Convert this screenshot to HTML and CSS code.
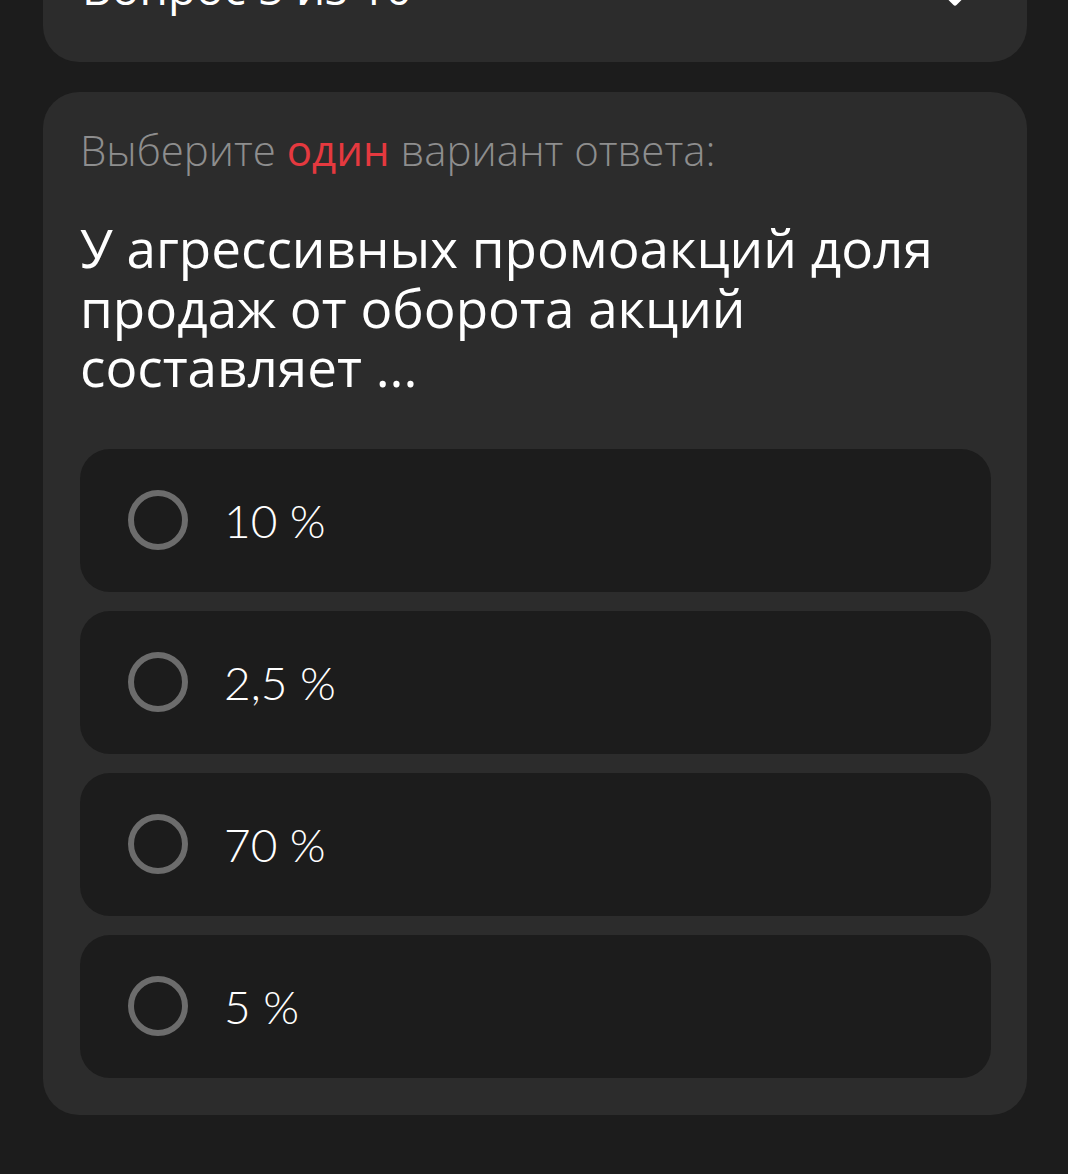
FILE: index.html
```html
<!DOCTYPE html>
<html lang="ru">
<head>
  <meta charset="UTF-8" />
  <meta name="viewport" content="width=device-width, initial-scale=1.0" />
  <title>Вопрос 5 из 10</title>
  <link rel="stylesheet" href="styles.css">
</head>
<body>
  <main class="page">
    <section class="card card-head">
      <div class="head-title">Вопрос 5 из 10</div>
      <svg class="chevron" width="28" height="18" viewBox="0 0 28 18">
        <path d="M3 3 L14 14 L25 3" fill="none" stroke="#fff" stroke-width="5" stroke-linecap="round" stroke-linejoin="round"/>
      </svg>
    </section>

    <section class="card card-question">
      <p class="hint">Выберите <span class="accent">один</span> вариант ответа:</p>
      <h2 class="question">У агрессивных промоакций доля продаж от оборота акций составляет ...</h2>
      <ul class="options">
        <li class="option"><span class="radio"></span><span class="option-text">10 %</span></li>
        <li class="option"><span class="radio"></span><span class="option-text">2,5 %</span></li>
        <li class="option"><span class="radio"></span><span class="option-text">70 %</span></li>
        <li class="option"><span class="radio"></span><span class="option-text">5 %</span></li>
      </ul>
    </section>
  </main>
</body>
</html>
```

FILE: styles.css
```css
body, html {
  margin: 0;
  padding: 0;
  background: #1c1c1c;
  font-family: 'Open Sans', 'Noto Sans', sans-serif;
  color: #fff;
  overflow: hidden;
}
.page {
  display: flex;
  flex-direction: column;
  gap: 30px;
  padding: 0 41px 0 43px;
  margin-top: -60px;
}
.card {
  background: #2c2c2c;
  border-radius: 36px;
}
.card-head {
  height: 122px;
  box-sizing: border-box;
  padding: 19px 58px 0 39px;
  display: flex;
  align-items: flex-start;
  justify-content: space-between;
}
.head-title {
  font-size: 46px;
  line-height: 56px;
  font-weight: 500;
}
.chevron {
  margin-top: 30px;
}
.card-question {
  padding: 33px 36px 37px 37px;
}
.hint {
  margin: 0;
  font-size: 42px;
  line-height: 50px;
  font-weight: 300;
  color: #8e8e8e;
}
.accent {
  color: #e5393f;
  font-weight: 400;
}
.question {
  margin: 43px 0 0;
  font-size: 53px;
  line-height: 59.5px;
  font-weight: 400;
}
.options {
  list-style: none;
  margin: 52px 0 0;
  padding: 0;
  display: flex;
  flex-direction: column;
  gap: 19px;
}
.option {
  background: #1c1c1c;
  border-radius: 30px;
  height: 143px;
  display: flex;
  align-items: center;
  padding-left: 48px;
}
.radio {
  width: 48px;
  height: 48px;
  border: 6px solid #6c6c6c;
  border-radius: 50%;
  flex-shrink: 0;
}
.option-text {
  margin-left: 36px;
  font-family: 'Lato', 'Open Sans', sans-serif;
  font-weight: 300;
  font-size: 46px;
}
```
